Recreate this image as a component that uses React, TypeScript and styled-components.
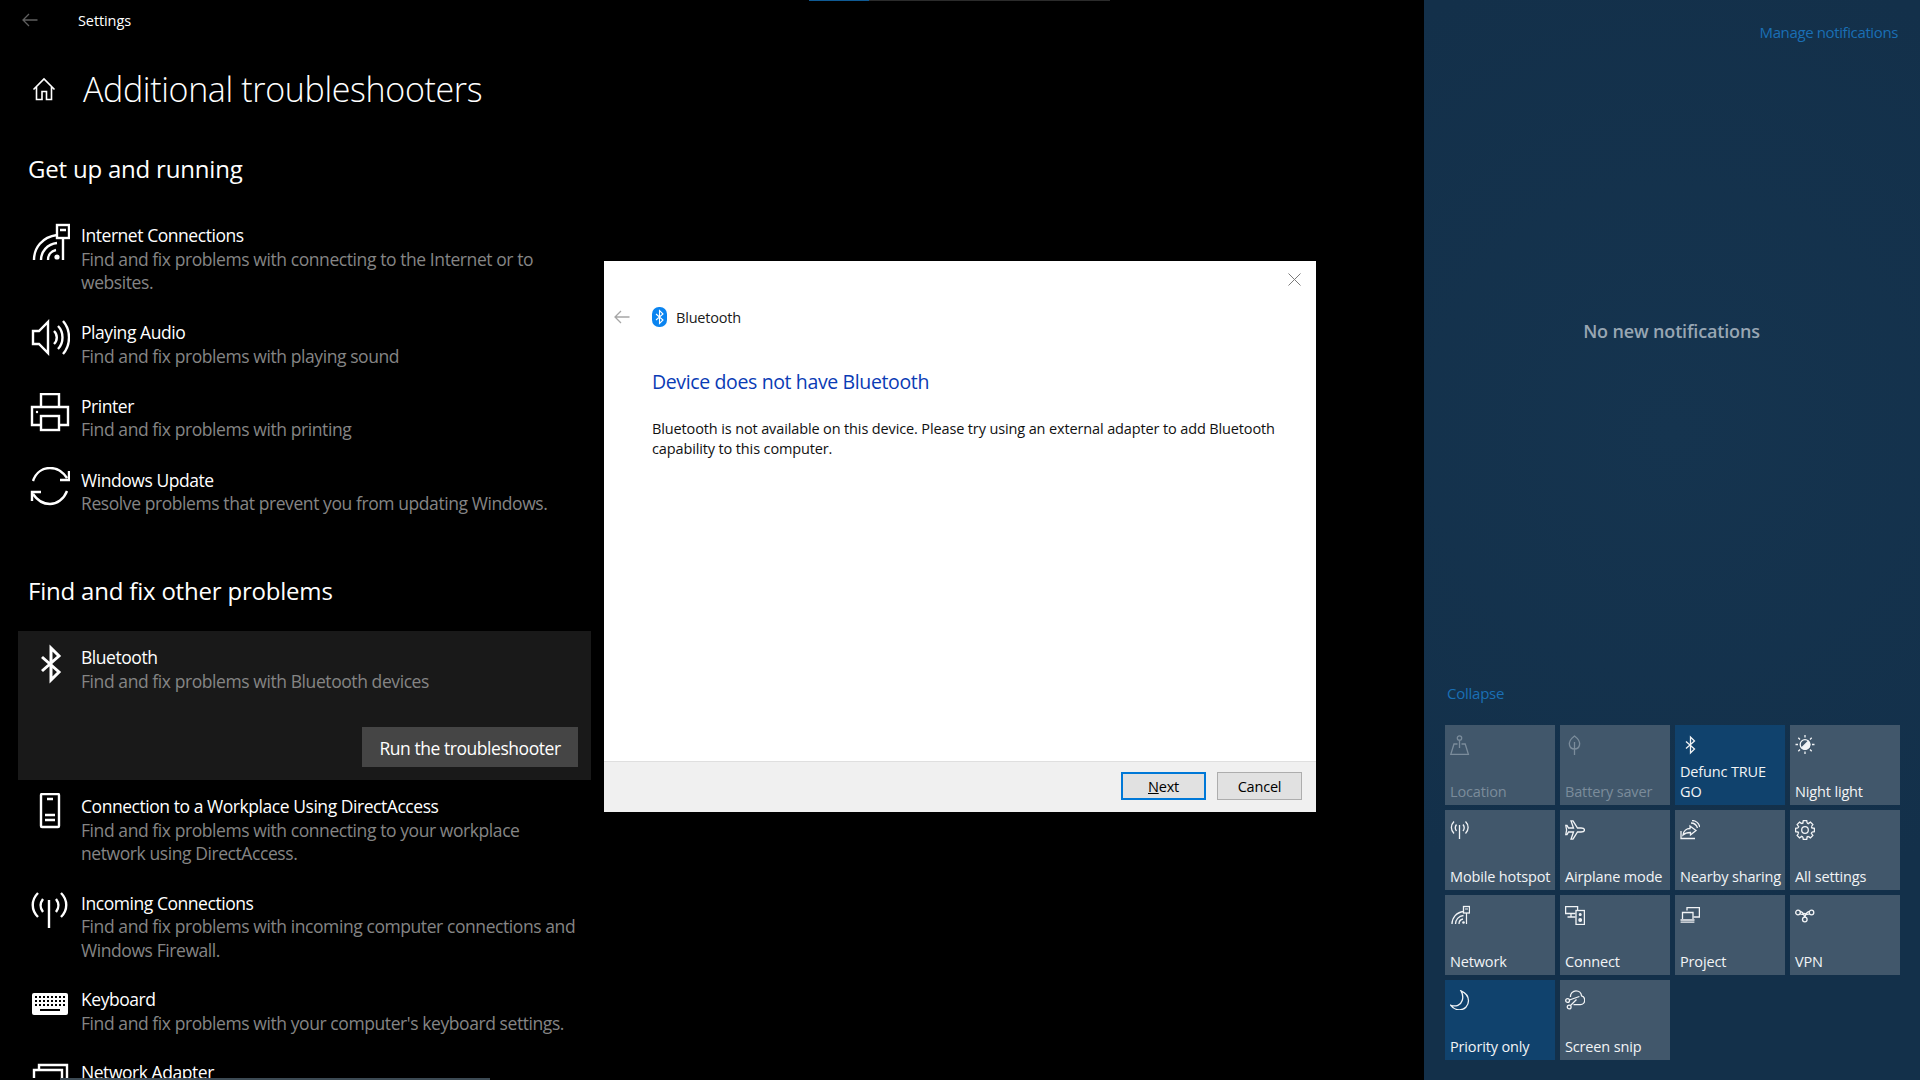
import React from "react";
import styled, { createGlobalStyle } from "styled-components";

const GlobalStyle = createGlobalStyle`
  html, body {
    margin: 0;
    padding: 0;
    background: #000;
    font-family: "Open Sans", "Noto Sans", "Liberation Sans", sans-serif;
  }
  * { box-sizing: border-box; }
`;

type IconProps = { size?: number; sw?: number };

const Svg = ({ size = 40, sw = 2.4, box = 40, children }: IconProps & { box?: number; children: React.ReactNode }) => (
  <svg width={size} height={size} viewBox={`0 0 ${box} ${box}`} fill="none" stroke="currentColor" strokeWidth={sw}>
    {children}
  </svg>
);

const NetworkIcon = (p: IconProps) => (
  <Svg {...p}>
    <rect x="27" y="3" width="12" height="13" />
    <path d="M30 8h6M33 16v22" strokeWidth={2.4} />
    <path d="M4 38C4 26 12 15 27 13M11 38C11 30 17 22 27 21M18 38c0-5 3-9 8-10" />
    <circle cx="27" cy="35" r="2.6" fill="currentColor" stroke="none" />
  </Svg>
);

const SpeakerIcon = () => (
  <Svg>
    <path d="M3 12h6l9-9v31l-9-9H3z" />
    <path d="M24 12a9 9 0 0 1 0 13M28 7c6 6 6 17 0 23M33 2c8 9 8 24 0 33" />
  </Svg>
);

const PrinterIcon = () => (
  <Svg>
    <path d="M11 14V1h18v13M11 32H2V14h36v18h-9" />
    <rect x="11" y="23" width="18" height="14" />
    <circle cx="7" cy="19" r="1.2" fill="currentColor" stroke="none" />
  </Svg>
);

const UpdateIcon = () => (
  <Svg>
    <path d="M3 14C6 5 13 1 20 1c7 0 13 4 17 10M39 4v9h-9M37 24c-3 8-10 13-17 13-7 0-13-4-17-10M2 34v-9h9" />
  </Svg>
);

const BluetoothIcon = ({ size = 40, sw = 3 }: IconProps) => (
  <Svg size={size} sw={sw}>
    <path d="M12 13l17 15-8 8V4l8 8-17 15" />
  </Svg>
);

const PhoneIcon = () => (
  <Svg>
    <rect x="11" y="1" width="18" height="33" rx="1" />
    <path d="M17 6h6M15 22h10M15 27h10" />
  </Svg>
);

const AntennaIcon = ({ size = 40, sw = 2.4 }: IconProps) => (
  <Svg size={size} sw={sw}>
    <path d="M19 10v28M8 3C1 10 1 20 8 27M31 3c7 7 7 17 0 24M13 9c-3 4-3 9 0 13M26 9c3 4 3 9 0 13" />
  </Svg>
);

const KeyboardIcon = () => (
  <svg width="40" height="40" viewBox="0 0 40 40">
    <rect x="2" y="7" width="36" height="22" rx="2" fill="#fff" />
    <g fill="#000">
      {[10, 14, 18].map(y =>
        [5, 9, 13, 17, 21, 25, 29, 33].map(x => <rect key={`${x}-${y}`} x={x} y={y} width="2" height="2" />)
      )}
      <rect x="10" y="23" width="20" height="2" />
    </g>
  </svg>
);

const AdapterIcon = () => (
  <Svg>
    <path d="M9 10V6h28v22h-4" />
    <path d="M4 34V11h28v23" />
  </Svg>
);

const HomeIcon = () => (
  <svg width="24" height="24" viewBox="0 0 24 24" fill="none" stroke="#fff" strokeWidth="1.6">
    <path d="M1.5 12.5L12 2l10.5 10.5M4.5 10v12.5h5.5V14.5h4.5v8h5V10" />
  </svg>
);

const BackArrow = ({ color }: { color: string }) => (
  <svg width="16" height="14" viewBox="0 0 16 14" fill="none" stroke={color} strokeWidth="1.3">
    <path d="M15.5 7H1M7 1L1 7l6 6" />
  </svg>
);

const TileSvg = ({ children }: { children: React.ReactNode }) => (
  <svg width="20" height="20" viewBox="0 0 20 20" fill="none" stroke="currentColor" strokeWidth="1.3">
    {children}
  </svg>
);

const LocationIcon = () => (
  <TileSvg>
    <circle cx="9.5" cy="3" r="2.2" />
    <path d="M9.5 5.2V13M7.5 9H4L.8 19.4h17.6L15.2 9h-3.7" />
  </TileSvg>
);

const LeafIcon = () => (
  <TileSvg>
    <path d="M9.5 1C5.5 4 4 7.5 4.5 10c.5 2.5 2.5 4 5 4s4.5-1.5 5-4c.5-2.5-1-6-5-9zM9.5 7v13" />
  </TileSvg>
);

const NightIcon = () => (
  <TileSvg>
    <circle cx="10" cy="9.5" r="4.8" />
    <path d="M13.4 6.1a4.8 4.8 0 0 1-6.8 6.8z" fill="currentColor" />
    <path d="M10 0v2.5M10 16.5V19M.5 9.5H3M17 9.5h2.5M3.3 2.8L5 4.5M15 14.5l1.7 1.7M16.7 2.8L15 4.5M5 14.5l-1.7 1.7" />
  </TileSvg>
);

const PlaneIcon = () => (
  <TileSvg>
    <path d="M19.5 10c0-1.4-1.8-2-3.5-2h-3.5L8 .8H6L8.5 8h-5L2 5.5H.8L1.6 10 .8 14.5H2L3.5 12h5L6 19.2h2L12.5 12H16c1.7 0 3.5-.6 3.5-2z" />
  </TileSvg>
);

const ShareIcon = () => (
  <TileSvg>
    <path d="M1 11v7.5h14M3 15c.5-4 3.5-6.5 7-6.5V6l6 4.5-5.5 4.500v-2.5c-3 0-5.5.5-7.5 2.5z" />
    <path d="M11 3c3 0 5.5 2 6.5 5M12 .5c4 0 7 3 7.8 6.5" />
  </TileSvg>
);

const GearIcon = () => {
  const teeth = [0, 45, 90, 135, 180, 225, 270, 315];
  return (
    <TileSvg>
      <circle cx="10" cy="10" r="3.3" />
      {teeth.map(a => (
        <path key={a} transform={`rotate(${a} 10 10)`} d="M7.8 3.2L8.3.6h3.4l.5 2.6M12.2 3.2l1.6.7" />
      ))}
    </TileSvg>
  );
};

const ConnectIcon = () => (
  <TileSvg>
    <path d="M10.5 8.5H.6V1.6h12v3.5M6 8.5V12M2.5 12h8" />
    <rect x="11" y="5.5" width="8.4" height="14" />
    <circle cx="15.2" cy="9.5" r=".9" fill="currentColor" />
    <circle cx="15.2" cy="15" r="1.3" fill="currentColor" />
  </TileSvg>
);

const ProjectIcon = () => (
  <TileSvg>
    <path d="M7 5.5V2.6h12.4v9.4H13.5" />
    <path d="M2.5 14V7.5H13V14M.5 15h14M.6 17.2h13.8" />
  </TileSvg>
);

const VpnIcon = () => (
  <TileSvg>
    <circle cx="3" cy="7.5" r="2.3" />
    <circle cx="16.5" cy="7.5" r="2.3" />
    <circle cx="9.8" cy="14.5" r="2.3" />
    <path d="M5 6.5c2.5 0 3.8 2.5 4.8 5.7M14.5 6.5c-2.5 0-3.7 2.5-4.7 5.7M5 8.8c1.5.8 3 1 4.8-.3 1.8 1.3 3.2 1.1 4.7.3" />
  </TileSvg>
);

const MoonIcon = () => (
  <TileSvg>
    <path d="M11 .8c4 1.7 7.5 5.2 7.5 10 0 5-4 9-9 9-3.5 0-6.8-1.8-8.7-4.5 5 1.7 10 0 11.5-5 1-3.5.3-6.8-1.3-9.5z" />
  </TileSvg>
);

const SnipIcon = () => (
  <TileSvg>
    <path d="M5.5 7C5 3.5 8 .8 11 .8c3 0 5.3 2.2 5.5 5 2 .5 3.2 2.5 3.2 4.5 0 2.500-2 4.300-4.200 4.300H8.500" />
    <circle cx="2.6" cy="10.5" r="1.9" />
    <circle cx="4.2" cy="17" r="1.9" />
    <path d="M4.4 10l10-3.500M5.500 15.500l6-6" />
  </TileSvg>
);

type Trouble = { icon: React.ReactNode; title: string; desc: string[] };

const upAndRunning: Trouble[] = [
  { icon: <NetworkIcon />, title: "Internet Connections", desc: ["Find and fix problems with connecting to the Internet or to", "websites."] },
  { icon: <SpeakerIcon />, title: "Playing Audio", desc: ["Find and fix problems with playing sound"] },
  { icon: <PrinterIcon />, title: "Printer", desc: ["Find and fix problems with printing"] },
  { icon: <UpdateIcon />, title: "Windows Update", desc: ["Resolve problems that prevent you from updating Windows."] },
];

const otherProblems: Trouble[] = [
  { icon: <PhoneIcon />, title: "Connection to a Workplace Using DirectAccess", desc: ["Find and fix problems with connecting to your workplace", "network using DirectAccess."] },
  { icon: <AntennaIcon />, title: "Incoming Connections", desc: ["Find and fix problems with incoming computer connections and", "Windows Firewall."] },
  { icon: <KeyboardIcon />, title: "Keyboard", desc: ["Find and fix problems with your computer's keyboard settings."] },
  { icon: <AdapterIcon />, title: "Network Adapter", desc: [] },
];

type QuickTile = { icon: React.ReactNode; label: React.ReactNode; active?: boolean; dim?: boolean };

const tiles: QuickTile[] = [
  { icon: <LocationIcon />, label: "Location", dim: true },
  { icon: <LeafIcon />, label: "Battery saver", dim: true },
  { icon: <BluetoothIcon size={20} sw={2.6} />, label: <>Defunc TRUE<br />GO</>, active: true },
  { icon: <NightIcon />, label: "Night light" },
  { icon: <AntennaIcon size={20} sw={2.6} />, label: "Mobile hotspot" },
  { icon: <PlaneIcon />, label: "Airplane mode" },
  { icon: <ShareIcon />, label: "Nearby sharing" },
  { icon: <GearIcon />, label: "All settings" },
  { icon: <NetworkIcon size={20} sw={2.6} />, label: "Network" },
  { icon: <ConnectIcon />, label: "Connect" },
  { icon: <ProjectIcon />, label: "Project" },
  { icon: <VpnIcon />, label: "VPN" },
  { icon: <MoonIcon />, label: "Priority only", active: true },
  { icon: <SnipIcon />, label: "Screen snip" },
];

const Row = ({ item }: { item: Trouble }) => (
  <TroubleRow>
    <IconSlot>{item.icon}</IconSlot>
    <div>
      <RowTitle>{item.title}</RowTitle>
      {item.desc.map(line => (
        <RowDesc key={line}>{line}</RowDesc>
      ))}
    </div>
  </TroubleRow>
);

export default function App() {
  return (
    <>
      <GlobalStyle />
      <Screen>
        <SettingsArea>
          <ProgressStrip>
            <ProgressFill />
          </ProgressStrip>
          <SettingsColumn>
            <TopBar>
              <BackButton>
                <BackArrow color="#5f5f5f" />
              </BackButton>
              <AppName>Settings</AppName>
            </TopBar>
            <PageHeader>
              <HomeSlot>
                <HomeIcon />
              </HomeSlot>
              <PageTitle>Additional troubleshooters</PageTitle>
            </PageHeader>
            <SectionTitle $top={42}>Get up and running</SectionTitle>
            <TroubleList $top={38} $gap={25.7}>
              {upAndRunning.map(item => (
                <Row key={item.title} item={item} />
              ))}
            </TroubleList>
            <SectionTitle $top={59.5}>Find and fix other problems</SectionTitle>
            <SelectedCard>
              <Row
                item={{
                  icon: <BluetoothIcon />,
                  title: "Bluetooth",
                  desc: ["Find and fix problems with Bluetooth devices"],
                }}
              />
              <RunButton>Run the troubleshooter</RunButton>
            </SelectedCard>
            <TroubleList $top={14} $gap={25}>
              {otherProblems.map(item => (
                <Row key={item.title} item={item} />
              ))}
            </TroubleList>
          </SettingsColumn>
          <ScrollLine />
          <Dialog>
            <DialogBody>
              <CloseRow>
                <svg width="13" height="13" viewBox="0 0 13 13" stroke="#7a7a7a" strokeWidth="1">
                  <path d="M.5.5l12 12M12.5.5l-12 12" />
                </svg>
              </CloseRow>
              <DialogNav>
                <BackArrow color="#a6a6a6" />
                <BluePill>
                  <svg width="15" height="20" viewBox="0 0 15 20" fill="none" stroke="#fff" strokeWidth="1.1">
                    <path d="M4 7l7 6-3.5 3.5v-13L11 7l-7 6" />
                  </svg>
                </BluePill>
                <DialogName>Bluetooth</DialogName>
              </DialogNav>
              <DialogHeading>Device does not have Bluetooth</DialogHeading>
              <DialogText>
                Bluetooth is not available on this device. Please try using an external adapter to add Bluetooth
                <br />
                capability to this computer.
              </DialogText>
            </DialogBody>
            <DialogFooter>
              <DialogButton $primary>
                <u>N</u>ext
              </DialogButton>
              <DialogButton>Cancel</DialogButton>
            </DialogFooter>
          </Dialog>
        </SettingsArea>
        <ActionCenter>
          <ManageLink>Manage notifications</ManageLink>
          <EmptyNote>No new notifications</EmptyNote>
          <CollapseLink>Collapse</CollapseLink>
          <TileGrid>
            {tiles.map((tile, i) => (
              <Tile key={i} $active={tile.active} $dim={tile.dim}>
                <TileIcon>{tile.icon}</TileIcon>
                <TileLabel>{tile.label}</TileLabel>
              </Tile>
            ))}
          </TileGrid>
        </ActionCenter>
      </Screen>
    </>
  );
}

const Screen = styled.div`
  display: flex;
  width: 1920px;
  height: 1080px;
  overflow: hidden;
  background: #000;
`;

const SettingsArea = styled.main`
  position: relative;
  width: 1424px;
  height: 1080px;
`;

const ProgressStrip = styled.div`
  position: absolute;
  top: 0;
  left: 809px;
  width: 301px;
  height: 1px;
  background: #2b2b2b;
`;

const ProgressFill = styled.div`
  width: 60px;
  height: 100%;
  background: #0f5a94;
`;

const ScrollLine = styled.div`
  position: absolute;
  left: 60px;
  bottom: 0;
  width: 430px;
  height: 2px;
  background: #3c4a54;
`;

const SettingsColumn = styled.div`
  width: 600px;
  height: 1078px;
  overflow: hidden;
  padding-left: 18px;
  color: #fff;
`;

const TopBar = styled.div`
  display: flex;
  align-items: center;
  height: 40px;
`;

const BackButton = styled.div`
  display: flex;
  width: 60px;
  padding-left: 4px;
`;

const AppName = styled.div`
  font-size: 14.5px;
  letter-spacing: -0.1px;
`;

const PageHeader = styled.div`
  display: flex;
  align-items: center;
  height: 44px;
  margin-top: 27px;
`;

const HomeSlot = styled.div`
  display: flex;
  width: 65px;
  padding-left: 14px;
`;

const PageTitle = styled.h1`
  margin: 0;
  font-size: 34px;
  font-weight: 300;
  letter-spacing: -0.35px;
  white-space: nowrap;
`;

const SectionTitle = styled.h2<{ $top: number }>`
  margin: ${p => p.$top}px 0 0 10px;
  font-size: 24px;
  line-height: 32px;
  font-weight: 400;
  letter-spacing: -0.2px;
`;

const TroubleList = styled.div<{ $top: number; $gap: number }>`
  display: flex;
  flex-direction: column;
  gap: ${p => p.$gap}px;
  margin-top: ${p => p.$top}px;
  padding-left: 12px;
`;

const TroubleRow = styled.div`
  display: flex;
  gap: 11px;
`;

const IconSlot = styled.div`
  flex: none;
  width: 40px;
  height: 40px;
  margin-top: -1px;
`;

const RowTitle = styled.div`
  font-size: 17.5px;
  line-height: 24.5px;
  letter-spacing: -0.45px;
  white-space: nowrap;
`;

const RowDesc = styled.div`
  font-size: 17.5px;
  line-height: 23.5px;
  letter-spacing: -0.42px;
  color: #858585;
  white-space: nowrap;
`;

const SelectedCard = styled.section`
  display: flex;
  flex-direction: column;
  width: 573px;
  height: 149px;
  margin-top: 24px;
  padding: 14px 13px 13px 12px;
  background: #191919;
`;

const RunButton = styled.div`
  display: flex;
  align-items: center;
  justify-content: center;
  align-self: flex-end;
  width: 216px;
  height: 40px;
  margin-top: auto;
  padding-top: 2px;
  background: #454545;
  font-size: 17.5px;
  letter-spacing: -0.45px;
`;

const Dialog = styled.div`
  position: absolute;
  left: 604px;
  top: 261px;
  display: flex;
  flex-direction: column;
  width: 712px;
  height: 551px;
  background: #fff;
  color: #000;
`;

const DialogBody = styled.div`
  flex: 1;
  padding: 0 15px 0 48px;
`;

const CloseRow = styled.div`
  display: flex;
  justify-content: flex-end;
  height: 42px;
  padding: 12px 0 0;
`;

const DialogNav = styled.div`
  display: flex;
  align-items: center;
  height: 28px;
  margin-left: -38px;
`;

const BluePill = styled.div`
  display: flex;
  align-items: center;
  justify-content: center;
  width: 15px;
  height: 20px;
  margin-left: 22px;
  border-radius: 7px;
  background: #0a84f0;
`;

const DialogName = styled.div`
  margin-left: 9px;
  font-size: 14.5px;
  letter-spacing: -0.2px;
  color: #1a1a1a;
`;

const DialogHeading = styled.div`
  margin-top: 37px;
  font-size: 19.5px;
  line-height: 28px;
  letter-spacing: -0.37px;
  color: #0a3bb5;
`;

const DialogText = styled.div`
  margin-top: 22.5px;
  font-size: 14.5px;
  line-height: 20px;
  letter-spacing: -0.13px;
  white-space: nowrap;
  color: #111;
`;

const DialogFooter = styled.div`
  display: flex;
  justify-content: flex-end;
  align-items: center;
  gap: 11px;
  height: 51px;
  padding: 0 14px 2px 0;
  background: #f0f0f0;
  border-top: 1px solid #dfdfdf;
`;

const DialogButton = styled.div<{ $primary?: boolean }>`
  display: flex;
  align-items: center;
  justify-content: center;
  width: 85px;
  height: 28px;
  font-size: 14.5px;
  letter-spacing: -0.2px;
  background: #e1e1e1;
  border: ${p => (p.$primary ? "2px solid #0078d7" : "1px solid #adadad")};
`;

const ActionCenter = styled.aside`
  display: flex;
  flex-direction: column;
  width: 496px;
  height: 1080px;
  padding: 0 22px 20px 21px;
  background: radial-gradient(circle at 50% 40%, #15344f 0%, #13304a 70%);
`;

const ManageLink = styled.div`
  align-self: flex-end;
  margin-top: 21px;
  font-size: 15px;
  line-height: 22px;
  letter-spacing: -0.38px;
  color: #1a6fb5;
`;

const EmptyNote = styled.div`
  align-self: center;
  margin-top: 276px;
  font-size: 18px;
  line-height: 24px;
  font-weight: 600;
  letter-spacing: -0.15px;
  color: #98a6b3;
`;

const CollapseLink = styled.div`
  margin-top: auto;
  margin-left: 2px;
  font-size: 15px;
  line-height: 22px;
  letter-spacing: -0.25px;
  color: #1a6fb5;
`;

const TileGrid = styled.div`
  display: grid;
  grid-template-columns: repeat(4, 110px);
  grid-auto-rows: 80px;
  gap: 5px;
  margin-top: 21px;
`;

const Tile = styled.div<{ $active?: boolean; $dim?: boolean }>`
  display: flex;
  flex-direction: column;
  padding: 10px 0 3px 5px;
  background: ${p => (p.$active ? "#10426d" : "#41576b")};
  color: ${p => (p.$dim ? "#7b8c9b" : "#f2f4f6")};
`;

const TileIcon = styled.div`
  flex: none;
  height: 20px;
`;

const TileLabel = styled.div`
  margin-top: auto;
  font-size: 14.5px;
  line-height: 20px;
  letter-spacing: -0.15px;
  white-space: nowrap;
`;
